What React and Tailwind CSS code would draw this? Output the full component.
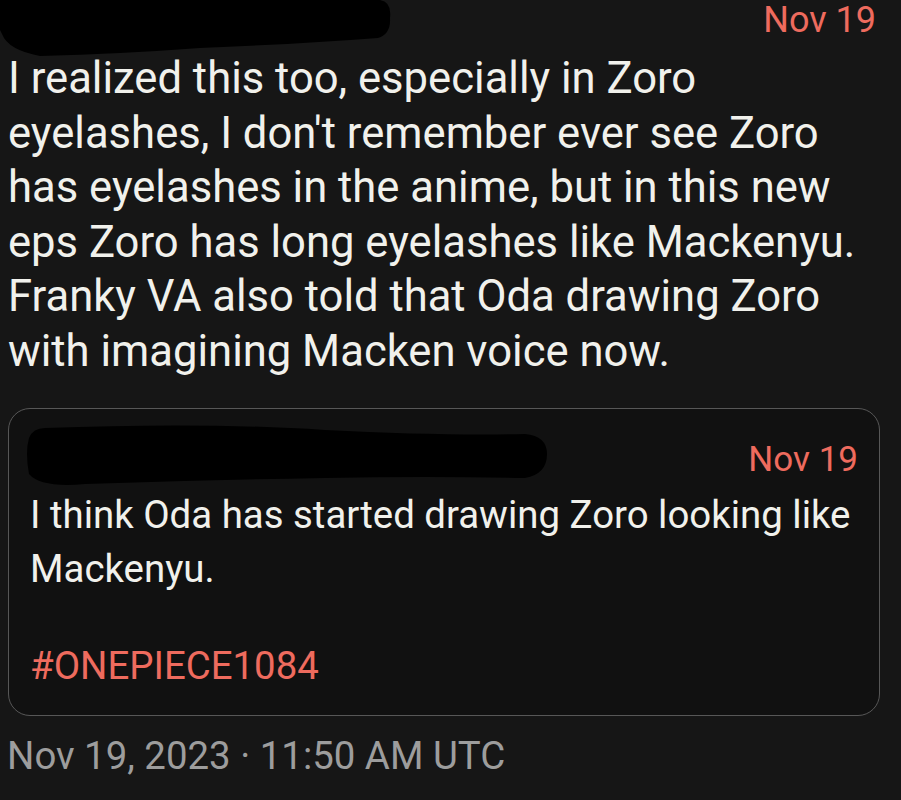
import React from "react";

const Redaction = ({ className, d, viewBox }) => (
  <svg className={className} viewBox={viewBox} preserveAspectRatio="none">
    <path d={d} fill="#000" />
  </svg>
);

const mainLines = [
  "I realized this too, especially in Zoro",
  "eyelashes, I don't remember ever see Zoro",
  "has eyelashes in the anime, but in this new",
  "eps Zoro has long eyelashes like Mackenyu.",
  "Franky VA also told that Oda drawing Zoro",
  "with imagining Macken voice now.",
];

const App = () => {
  return (
    <div className="w-[901px] h-[800px] bg-[#161616] overflow-hidden font-['Roboto',sans-serif]">
      {/* Header */}
      <div className="h-[52px] flex justify-between">
        <Redaction
          className="w-[392px] h-[57px]"
          viewBox="0 0 392 57"
          d="M0 0 L380 0 Q392 2 390 18 Q391 34 378 38 Q300 44 200 48 Q120 54 40 56 Q8 50 2 34 L0 30 Z"
        />
        <div className="pt-[2px] pr-[25px] text-[36px] leading-[36px] text-[#ee6b5e]">
          Nov 19
        </div>
      </div>

      {/* Post body */}
      <div className="pl-[8px] text-[43.6px] leading-[54.5px] text-[#f1f1ec]">
        {mainLines.map((line, i) => (
          <div key={i} className="whitespace-nowrap">
            {line}
          </div>
        ))}
      </div>

      {/* Quoted post */}
      <div className="mt-[29px] ml-[8px] w-[872px] h-[308px] rounded-[22px] border-[1.5px] border-[#575757] bg-[#111111] px-[21px]">
        <div className="flex justify-between pt-[13px]">
          <Redaction
            className="w-[524px] h-[66px] -ml-[5px]"
            viewBox="0 0 524 66"
            d="M20 6 Q180 0 300 8 Q420 14 500 12 Q522 14 522 32 Q522 52 500 56 Q400 54 300 56 Q180 58 60 62 Q16 66 4 52 Q0 30 4 16 Q8 6 20 6 Z"
          />
          <div className="pt-[20px] text-[35px] leading-[35px] text-[#ee6b5e]">
            Nov 19
          </div>
        </div>
        <div className="text-[38.4px] leading-[54px] text-[#f1f1ec]">
          <div className="whitespace-nowrap">
            I think Oda has started drawing Zoro looking like
          </div>
          <div>Mackenyu.</div>
        </div>
        <div className="mt-[43px] text-[38.4px] leading-[54px] text-[#ee6b5e]">
          #ONEPIECE1084
        </div>
      </div>

      {/* Timestamp */}
      <div className="pl-[7px] pt-[13px] text-[38.4px] leading-[54px] text-[#9d9d9d]">
        Nov 19, 2023 · 11:50 AM UTC
      </div>
    </div>
  );
};

export default App;
